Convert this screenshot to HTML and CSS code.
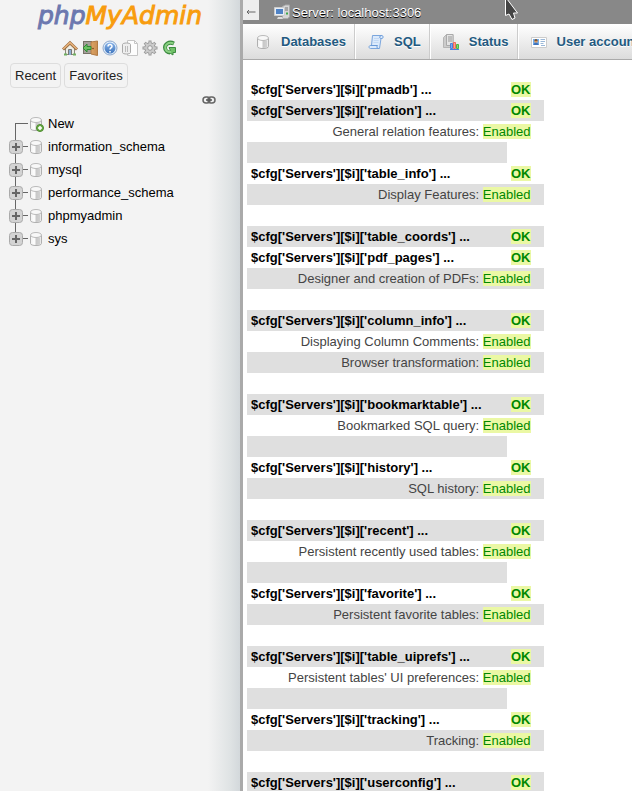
FILE: index.html
```html
<!DOCTYPE html>
<html lang="en">
<head>
<meta charset="utf-8">
<title>phpMyAdmin</title>
<link rel="stylesheet" href="styles.css">
</head>
<body>
<svg class="defs" aria-hidden="true">
  <defs>
    <linearGradient id="metal"><stop offset="0" stop-color="#f0f0f0"/><stop offset=".35" stop-color="#fff"/><stop offset=".5" stop-color="#d4d4d4"/><stop offset="1" stop-color="#eee"/></linearGradient>
    <linearGradient id="blue" x2="0" y2="1"><stop offset="0" stop-color="#8ab4e8"/><stop offset="1" stop-color="#3d74bd"/></linearGradient>
    <linearGradient id="wood"><stop offset="0" stop-color="#dca467"/><stop offset="1" stop-color="#c98d50"/></linearGradient>
    <symbol id="db" viewBox="0 0 16 16">
      <path d="M2.500 4v8.500c0 2.700 11 2.700 11 0V4" fill="url(#metal)" stroke="#b0b0b0"/>
      <path d="M8 7h4v6l-4 .8z" fill="#bbb" opacity=".5"/>
      <ellipse cx="8" cy="4" rx="5.500" ry="2.500" fill="#f8f8f8" stroke="#bbb"/>
    </symbol>
    <symbol id="plus" viewBox="0 0 14 14">
      <rect x=".5" y=".5" width="13" height="13" rx="3" fill="#d3d3d3" stroke="#aaa"/>
      <path d="M7 3v8M3 7h8" stroke="#666" stroke-width="2"/>
    </symbol>
  </defs>
</svg>
<aside class="sidebar">
  <a class="logo" href="#"><span class="logo-php">php</span><span class="logo-admin">MyAdmin</span></a>
  <nav class="shortcuts" aria-label="Shortcuts">
    <a href="#" aria-label="Home"><svg viewBox="0 0 16 16"><path d="M3.500 8v6.500h9V8L8 4z" fill="#eeeee6" stroke="#8a8a7e"/><path d="M6.500 15V9.500h3V15" fill="#8ab0d3" stroke="#777"/><path d="M1 9.500 8 2.800l7 6.700" fill="none" stroke="#96693c" stroke-width="3"/><path d="M1.200 9 8 2.600 14.800 9" fill="none" stroke="#e6b07a" stroke-width="1.700"/><path d="M2 14.500h3m6 0h3" stroke="#6fb060" stroke-width="2"/></svg></a>
    <a href="#" aria-label="Log out"><svg viewBox="0 0 16 16"><path d="M1 1h9v13H1z" fill="#777269"/><path d="M2 2h7v11H2z" fill="#a5a09a"/><path d="M9 2l6.500-1v14.500L9 14z" fill="url(#wood)" stroke="#b07a45"/><circle cx="11" cy="8.500" r=".8" fill="#704719"/><path d="M1 8l4-4v2.500h4v3H5V12z" fill="#6cc062" stroke="#2f8a35"/></svg></a>
    <a href="#" aria-label="Documentation"><svg viewBox="0 0 16 16"><circle cx="8" cy="8" r="7" fill="#e4effb" stroke="#8ca8cd"/><circle cx="8" cy="8" r="5.500" fill="url(#blue)"/><path d="M6 6.500C6 4 10 4 10 6.300 10 8 8 7.800 8 9.500M8 11v1.500" fill="none" stroke="#fff" stroke-width="1.500"/></svg></a>
    <a href="#" aria-label="MySQL documentation"><svg viewBox="0 0 16 16"><path d="M5.500.5h7l3 3v12h-10z" fill="#fdfdfd" stroke="#c5c5c5"/><path d="M12.500.5v3h3" fill="none" stroke="#c5c5c5"/><path d="M.5 4.500c0-2 8-2 8 0v8c0 2-8 2-8 0z" fill="#eee" stroke="#aaa"/><path d="M3.500 6v6m2-6v6" stroke="#bbb"/></svg></a>
    <a href="#" aria-label="Settings"><svg viewBox="0 0 16 16"><path d="M8 .5v15M.5 8h15M2.700 2.700l10.600 10.600m0-10.600L2.700 13.300" stroke="#999" stroke-width="3"/><circle cx="8" cy="8" r="5.300" fill="#c8c8c8" stroke="#999"/><path d="M8 1.500v13M1.500 8h13M3.400 3.400l9.200 9.200m0-9.200-9.200 9.200" stroke="#ccc" stroke-width="1.500"/><circle cx="8" cy="8" r="2.300" fill="#f3f3f3" stroke="#999"/></svg></a>
    <a href="#" aria-label="Reload navigation"><svg viewBox="0 0 16 16"><path d="M12 3.500C6.500 1 3 4.500 3 7.500s2.500 5 5 5" fill="none" stroke="#3c8a40" stroke-width="4"/><path d="M7 7.500h6.500v5H11v2.500L6.500 12l2-1.500z" fill="#6fc067" stroke="#3c8a40"/><path d="M11.500 3.500C6.500 1.500 3.300 4.500 3.300 7.500s2.200 4.500 5.700 4.500" fill="none" stroke="#8ad082" stroke-width="2"/></svg></a>
  </nav>
  <div class="quick">
    <button type="button">Recent</button>
    <button type="button">Favorites</button>
  </div>
  <a class="link-panel" href="#" aria-label="Unlink from main panel"><svg viewBox="0 0 14 8"><rect x="1" y="1" width="7" height="6" rx="3" fill="none" stroke="#666" stroke-width="1.500"/><rect x="6" y="1" width="7" height="6" rx="3" fill="none" stroke="#666" stroke-width="1.500"/><path d="M4 4h6" stroke="#555" stroke-width="1.500"/></svg></a>
  <ul class="tree">
    <li><span class="branch first"></span><svg class="db" viewBox="0 0 16 16"><use href="#db"/><circle cx="12" cy="12" r="3.500" fill="#6cae48" stroke="#4c8a2e"/><path d="M12 10v4m-2-2h4" stroke="#fff" stroke-width="1.500"/></svg><a href="#">New</a></li>
    <li><span class="branch"><svg><use href="#plus"/></svg></span><svg class="db"><use href="#db"/></svg><a href="#">information_schema</a></li>
    <li><span class="branch"><svg><use href="#plus"/></svg></span><svg class="db"><use href="#db"/></svg><a href="#">mysql</a></li>
    <li><span class="branch"><svg><use href="#plus"/></svg></span><svg class="db"><use href="#db"/></svg><a href="#">performance_schema</a></li>
    <li><span class="branch"><svg><use href="#plus"/></svg></span><svg class="db"><use href="#db"/></svg><a href="#">phpmyadmin</a></li>
    <li><span class="branch last"><svg><use href="#plus"/></svg></span><svg class="db"><use href="#db"/></svg><a href="#">sys</a></li>
  </ul>
</aside>
<main class="content">
  <header class="server">
    <button class="collapse" type="button" aria-label="Hide panel"><svg viewBox="0 0 10 6"><path d="M1 3h8.500M3 1 1 3l2 2" fill="none" stroke="#666"/></svg></button>
    <svg class="server-icon" viewBox="0 0 16 16"><path d="M8.500 2.500l3-1.500h4v12l-2 1.500h-5z" fill="#d6d6d6" stroke="#aaa"/><path d="M11 4h3m-3 2h3" stroke="#777"/><path d="M12 9.500h2" stroke="#3da94a" stroke-width="2"/><path d="M.5 3.500h10v8H.5z" fill="#e8eef5" stroke="#ccc"/><path d="M2 5h7v5H2z" fill="#4f83c6"/><path d="M4 13h4l1 2H3z" fill="#ddd"/></svg>
    <a href="#">Server: localhost:3306</a>
  </header>
  <nav class="tabs" aria-label="Server pages">
    <a href="#"><svg><use href="#db"/></svg>Databases</a>
    <a href="#"><svg viewBox="0 0 16 16"><path d="M4.500 1.500h9.500c1.500 0 1.500 3 0 3h-1L11.500 14.500H2.500c-2 0-2-3 0-3h1z" fill="#dceafb" stroke="#7ba6dd"/><path d="M12.800 4.500c-1.500 0-1.500-2.500.5-3M2.500 11.500h7c-1 1-.5 3 1 3" fill="none" stroke="#6a9ad8"/><path d="M6 4.500h5m-5.300 2h5m-5.300 2h5" stroke="#c2d9f5"/></svg>SQL</a>
    <a href="#"><svg viewBox="0 0 16 16"><path d="M.5 3.500l3-3h6.500v11l-2 2H.5z" fill="#ccc" stroke="#b5b5b5"/><path d="M3.500.5h6.500v11H3.500z" fill="#e4e4e4" stroke="#aaa"/><path d="M5 3h4M5 5h4M5 7h4" stroke="#999"/><path d="M7.500 9.500h2v5h-2z" fill="#7daaf0" stroke="#4a80dc"/><path d="M10.500 8.500h2v6h-2z" fill="#ff9e92" stroke="#f06a5c"/><path d="M13.500 10.500h2v4h-2z" fill="#84d878" stroke="#4ab844"/><path d="M7 15.500h9" stroke="#4a80dc"/></svg>Status</a>
    <a href="#"><svg viewBox="0 0 16 16"><path d="M.5 3.500h15v10H.5z" fill="#fff" stroke="#ccc"/><path d="M2 5h6v6H2z" fill="#75aeea"/><circle cx="5" cy="7.200" r="1.600" fill="#d7955d"/><path d="M3.400 6.700c0-2 3.200-2 3.200 0" fill="#754517"/><path d="M2.500 11c0-3 5-3 5 0z" fill="#3f72ba"/><path d="M9.500 5.500h4.500m-4.500 2H14m-4.500 2h3M10 11.500h4" stroke="#9bb8d8"/></svg>User accounts</a>
  </nav>
  <table class="status">
    <tbody>
    <tr><th scope="row">$cfg['Servers'][$i]['pmadb'] ...</th><td><mark>OK</mark></td></tr>
    <tr><th scope="row">$cfg['Servers'][$i]['relation'] ...</th><td><mark>OK</mark></td></tr>
    <tr><td colspan="2">General relation features: <mark>Enabled</mark></td></tr>
    <tr><td></td></tr>
    <tr><th scope="row">$cfg['Servers'][$i]['table_info'] ...</th><td><mark>OK</mark></td></tr>
    <tr><td colspan="2">Display Features: <mark>Enabled</mark></td></tr>
    <tr><td></td></tr>
    <tr><th scope="row">$cfg['Servers'][$i]['table_coords'] ...</th><td><mark>OK</mark></td></tr>
    <tr><th scope="row">$cfg['Servers'][$i]['pdf_pages'] ...</th><td><mark>OK</mark></td></tr>
    <tr><td colspan="2">Designer and creation of PDFs: <mark>Enabled</mark></td></tr>
    <tr><td></td></tr>
    <tr><th scope="row">$cfg['Servers'][$i]['column_info'] ...</th><td><mark>OK</mark></td></tr>
    <tr><td colspan="2">Displaying Column Comments: <mark>Enabled</mark></td></tr>
    <tr><td colspan="2">Browser transformation: <mark>Enabled</mark></td></tr>
    <tr><td></td></tr>
    <tr><th scope="row">$cfg['Servers'][$i]['bookmarktable'] ...</th><td><mark>OK</mark></td></tr>
    <tr><td colspan="2">Bookmarked SQL query: <mark>Enabled</mark></td></tr>
    <tr><td></td></tr>
    <tr><th scope="row">$cfg['Servers'][$i]['history'] ...</th><td><mark>OK</mark></td></tr>
    <tr><td colspan="2">SQL history: <mark>Enabled</mark></td></tr>
    <tr><td></td></tr>
    <tr><th scope="row">$cfg['Servers'][$i]['recent'] ...</th><td><mark>OK</mark></td></tr>
    <tr><td colspan="2">Persistent recently used tables: <mark>Enabled</mark></td></tr>
    <tr><td></td></tr>
    <tr><th scope="row">$cfg['Servers'][$i]['favorite'] ...</th><td><mark>OK</mark></td></tr>
    <tr><td colspan="2">Persistent favorite tables: <mark>Enabled</mark></td></tr>
    <tr><td></td></tr>
    <tr><th scope="row">$cfg['Servers'][$i]['table_uiprefs'] ...</th><td><mark>OK</mark></td></tr>
    <tr><td colspan="2">Persistent tables' UI preferences: <mark>Enabled</mark></td></tr>
    <tr><td></td></tr>
    <tr><th scope="row">$cfg['Servers'][$i]['tracking'] ...</th><td><mark>OK</mark></td></tr>
    <tr><td colspan="2">Tracking: <mark>Enabled</mark></td></tr>
    <tr><td></td></tr>
    <tr><th scope="row">$cfg['Servers'][$i]['userconfig'] ...</th><td><mark>OK</mark></td></tr>
    </tbody>
  </table>
</main>
<svg class="pointer" viewBox="0 0 14 21" aria-hidden="true"><path d="M1.500-3v18.500l3.500-1.500 3 5.500 3-1.500-1.500-5h4z" fill="#444" stroke="#fff"/></svg>
</body>
</html>
```
FILE: styles.css
```css
* {
  box-sizing: border-box;
}

body {
  display: flex;
  height: 100vh;
  margin: 0;
  overflow: hidden;
  background: #fff;
  color: #444;
  font: 13px/21px "Liberation Sans", sans-serif;
}

a {
  color: inherit;
  text-decoration: none;
}

svg {
  display: block;
  flex: none;
  width: 16px;
  height: 16px;
}

.defs {
  position: absolute;
  width: 0;
  height: 0;
}

.sidebar {
  display: flex;
  flex: none;
  flex-direction: column;
  width: 243px;
  border-right: 3px solid #aaa;
  background: linear-gradient(to left, #d3d8db, #dfe3e4 10px, #f3f3f3 32px);
  color: #000;
}

.logo {
  align-self: center;
  height: 40px;
  font: italic 25px/32px "DejaVu Sans", sans-serif;
  -webkit-text-stroke: 1px;
}

.logo-php {
  color: #6c78af;
}

.logo-admin {
  color: #f89c0e;
}

.shortcuts {
  display: flex;
  justify-content: center;
  gap: 4px;
}

.quick {
  display: flex;
  gap: 3px;
  margin-top: 7px;
  padding-left: 10px;
}

.quick button {
  height: 25px;
  padding: 0 4px;
  border: 1px solid #ddd;
  border-radius: 4px;
  background: #f3f3f3;
  color: #222;
  font: inherit;
}

.link-panel {
  align-self: flex-end;
  margin: 8px 24px 0 0;
}

.link-panel svg {
  width: 14px;
  height: 8px;
}

.tree {
  margin: 8px 0 0;
  padding: 0 0 0 9px;
  list-style: none;
}

.tree li {
  display: flex;
  align-items: center;
  height: 23px;
}

.branch {
  display: flex;
  align-items: center;
  align-self: stretch;
  width: 19px;
  background:
    linear-gradient(#666, #666) 6px 0 / 1px 100% no-repeat,
    linear-gradient(#666, #666) 6px 11px / 15px 1px no-repeat;
}

.branch.first {
  background:
    linear-gradient(#666, #666) 6px 11px / 1px 100% no-repeat,
    linear-gradient(#666, #666) 6px 11px / 15px 1px no-repeat;
}

.branch.last {
  background:
    linear-gradient(#666, #666) 6px 0 / 1px 50% no-repeat,
    linear-gradient(#666, #666) 6px 11px / 15px 1px no-repeat;
}

.branch svg {
  width: 14px;
  height: 14px;
}

.tree a {
  margin-left: 4px;
}

.content {
  flex: 1;
  min-width: 0;
  overflow: hidden;
}

.server {
  display: flex;
  align-items: flex-start;
  height: 24px;
  background: #888;
  color: #fff;
  text-shadow: 0 1px 0 #000;
}

.server-icon {
  margin: 4px 2px 0 15px;
}

.server a {
  padding-top: 2px;
}

.collapse {
  display: grid;
  place-items: center;
  width: 16px;
  height: 20px;
  padding: 4px 0 0;
  border: 0;
  background: #eee;
}

.collapse svg {
  width: 10px;
  height: 6px;
}

.tabs {
  display: flex;
  height: 36px;
  overflow: hidden;
  border-bottom: 1px solid #aaa;
  background: linear-gradient(#fff, #dcdcdc);
}

.tabs a {
  display: flex;
  flex: none;
  align-items: center;
  gap: 10px;
  padding: 0 9px 0 12px;
  border-right: 1px solid #fff;
  box-shadow: inset -1px 0 #ccc;
  color: #235a81;
  font-weight: bold;
  text-shadow: 0 1px 0 #fff;
  white-space: nowrap;
}

.status {
  margin: 19px 0 0 4px;
  border-collapse: collapse;
  white-space: nowrap;
}

.status th,
.status td {
  height: 21px;
  padding: 0 13px 0 4px;
  text-align: right;
}

.status th {
  width: 260px;
  color: #000;
  text-align: left;
}

.status th + td {
  font-weight: bold;
}

.status tr:nth-child(even) > * {
  background: #dfdfdf;
}

.status mark {
  background: #ebf8a4;
  color: #080;
}

.pointer {
  position: absolute;
  top: 0;
  left: 504px;
  width: 14px;
  height: 21px;
}
```
